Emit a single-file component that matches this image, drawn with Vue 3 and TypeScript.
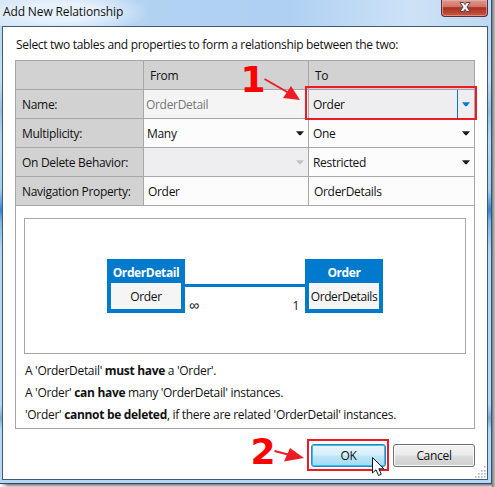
<script setup lang="ts">
interface Cell { text: string; arrow?: boolean; kind?: string }
interface Row { label: string; from: Cell; to: Cell }
const rows: Row[] = [
  { label: 'Name:', from: { text: 'OrderDetail', kind: 'readonly' }, to: { text: 'Order', arrow: true, kind: 'active' } },
  { label: 'Multiplicity:', from: { text: 'Many', arrow: true }, to: { text: 'One', arrow: true } },
  { label: 'On Delete Behavior:', from: { text: '', arrow: true, kind: 'disabled' }, to: { text: 'Restricted', arrow: true } },
  { label: 'Navigation Property:', from: { text: 'Order', kind: 'plain' }, to: { text: 'OrderDetails', kind: 'plain' } },
]
const grip: number[][] = [[9, 0], [6, 4], [9, 4], [3, 7], [6, 7], [9, 7], [0, 10], [3, 10], [6, 10], [9, 10]]
</script>

<template>
  <div class="screen">
    <div class="window">
      <header class="titlebar">
        <span class="title">Add New Relationship</span>
        <button class="close" aria-label="Close">
          <svg width="14" height="12" viewBox="0 0 14 12"><path d="M2 1.5h3.5L7 3.6l1.5-2.1H12L9 6l3 4.5H8.5L7 8.4l-1.5 2.1H2L5 6z" fill="#f5f3f3" stroke="#4d4654" stroke-width="1" /></svg>
        </button>
      </header>
      <main class="client">
        <p class="intro">Select two tables and properties to form a relationship between the two:</p>
        <section class="panel">
          <div class="grid">
            <div class="cell head"></div>
            <div class="cell head">From</div>
            <div class="cell head">To</div>
            <template v-for="r in rows" :key="r.label">
              <div class="cell label">{{ r.label }}</div>
              <div v-for="(c, i) in [r.from, r.to]" :key="i" class="cell value" :class="c.kind">
                <span class="text">{{ c.text }}</span>
                <span v-if="c.arrow" class="drop"><svg width="8" height="5" viewBox="0 0 8 5"><path d="M0 0.2h8L4.7 4.2h-1.4z" fill="currentColor" /></svg></span>
              </div>
            </template>
          </div>
          <div class="diagram">
            <div class="entity"><b>OrderDetail</b><span>Order</span></div>
            <div class="link"><i></i><div class="ends"><span class="many">∞</span><span>1</span></div></div>
            <div class="entity"><b>Order</b><span class="long">OrderDetails</span></div>
          </div>
          <div class="notes">
            <p>A 'OrderDetail' <b>must have</b> a 'Order'.</p>
            <p>A 'Order' <b>can have</b> many 'OrderDetail' instances.</p>
            <p>'Order' <b>cannot be deleted</b>, if there are related 'OrderDetail' instances.</p>
          </div>
        </section>
        <footer class="actions">
          <button class="btn ok">OK</button>
          <button class="btn cancel">Cancel</button>
        </footer>
      </main>
    </div>
    <svg class="overlay" width="495" height="487" viewBox="0 0 495 487">
      <g fill="#aab4c8"><rect v-for="(g, i) in grip" :key="i" :x="475 + g[0]" :y="466 + g[1]" width="1.6" height="1.6" /></g>
      <g fill="none" stroke="#ed1c24" stroke-width="2">
        <rect x="306" y="87" width="170" height="32" />
        <rect x="308" y="440" width="80" height="30" />
        <path d="M264.5 79L288 92.500M274.500 451L288 454.500" />
      </g>
      <path d="M300 100L291 86L283 98zM304 458L290 448L284 461.500z" fill="#ed1c24" />
      <text x="240.500" y="92" class="num">1</text>
      <text x="250.500" y="464" class="num">2</text>
      <path d="M372.500 457.500v15.500l3.500-3.200 2.500 5.700 2.800-1.200-2.500-5.500h5z" fill="#fff" stroke="#111827" />
    </svg>
  </div>
</template>

<style>
body { background: #fff; overflow: hidden; }
</style>
<style scoped>
.screen, .screen * { box-sizing: border-box; }
.screen { position: relative; width: 495px; height: 487px; overflow: hidden; font: 12px/16px "Open Sans", "Noto Sans", sans-serif; letter-spacing: -0.31px; color: #111; background: linear-gradient(90deg, #fff 0, #fff0 8px), linear-gradient(90deg, transparent 492px, #777 492px, #c4c4c4 495px), linear-gradient(#999 484px, #777 484px, #ddd 487px); }
.window { width: 492px; height: 484px; padding: 0 3px 3px 2px; border-right: 1px solid #315579; border-bottom: 1px solid #33495f; background: linear-gradient(#b4d4f3 0, #c5def5 80px, #98bfe0 110px, #b7d9f5 140px, #a5cff2 190px, #3686d2 210px, #7cb7e7 222px, #b3d7f5 250px, #b3d7f5 405px, #7cabd5 418px, #b3d7f5 430px); }
.titlebar { display: flex; justify-content: space-between; height: 26px; margin: 0 -3px 0 -2px; padding-left: 3px; background: radial-gradient(ellipse 90px 22px at 60px 12px, #e7f1fb 40%, #d5e7f900 100%), linear-gradient(90deg, #d0e4f8 0, #b2d2f2 150px, #afd0f2 290px, #cde2f7 410px, #bed9f2); }
.title { padding-top: 4px; letter-spacing: -0.13px; }
.close { width: 47px; height: 17px; margin-right: 3px; padding: 0; border: 1px solid #593039; border-top: 0; border-radius: 0 0 4px 4px; background: linear-gradient(#dd9a8e, #cf7468 42%, #ad2e20 48%, #c75743); box-shadow: inset 0 0 0 1px #eeb6ac99; display: flex; justify-content: center; align-items: center; }
.close svg { position: relative; top: -1px; }
.client { height: 454px; border: 1px solid #435a74; background: #fff; padding: 9px 12px 0; }
.intro { margin: 0; height: 24px; padding: 0 1px; line-height: 18px; white-space: nowrap; }
.panel { width: 460px; height: 369px; border: 1px solid #a7a7a7; }
.grid { display: grid; grid-template-columns: 128px 165px 165px; grid-auto-rows: 29px; width: 458px; }
.cell { display: flex; align-items: center; border-right: 1px solid #a7a7a7; border-bottom: 1px solid #a7a7a7; white-space: nowrap; background: #fcfcfc; line-height: 18px; }
.cell:nth-child(3n) { border-right: 0; }
.head, .label { background: #d2d2d2; padding: 2px 0 0 6px; }
.value { padding-left: 3px; justify-content: space-between; }
.text { padding-top: 2px; }
.value.readonly { background: #f4f4f4; color: #777; padding-left: 2px; }
.value.active, .value.disabled { background: #eeeef0; }
.value:nth-child(3n) { padding-left: 4px; }
.value.plain { padding-left: 4px; }
.value.plain:nth-child(3n) { padding-left: 5px; }
.drop { width: 17px; height: 28px; display: flex; align-items: center; justify-content: center; color: #1c1c1c; }
.disabled .drop { color: #c3c3c5; }
.active .drop { color: #007acc; border-left: 1px solid #007acc; }
.diagram { display: flex; align-items: flex-start; width: 442px; height: 136px; margin: 12px 0 0 8px; padding: 40px 0 0 82px; border: 1px solid #a7a7a7; }
.entity { width: 78px; height: 54px; padding: 0 4px 4px; background: #007acc; display: flex; flex-direction: column; text-align: center; }
.entity b { height: 24px; line-height: 27px; color: #fff; margin: 0 -4px; letter-spacing: -0.38px; }
.entity span { height: 26px; line-height: 27px; background: #f5f5f5; white-space: nowrap; }
.entity .long { letter-spacing: -0.4px; }
.link { width: 120px; padding-top: 25px; }
.link i { display: block; height: 3px; background: #007acc; }
.ends { display: flex; justify-content: space-between; padding: 11px 6px 0 4px; }
.many { font: 14px/15px "Liberation Sans", sans-serif; }
.notes { padding: 9px 9px 0; }
.notes p { margin: 0; height: 22px; white-space: nowrap; }
.actions { display: flex; justify-content: flex-end; gap: 7px; padding-top: 15px; }
.btn { height: 23px; padding: 0; border: 1px solid #707070; border-radius: 3px; font: inherit; letter-spacing: inherit; color: #111; background: linear-gradient(#f3f3f3, #ebebeb 48%, #dcdcdc 52%, #cfcfcf); box-shadow: inset 0 0 0 1px #fafafa; }
.ok { width: 75px; border-color: #3c7fb1; background: linear-gradient(#e8f5fc, #d7effb 48%, #bde6fb 52%, #a6daf4); box-shadow: inset 0 0 0 1px #28c4f4; }
.cancel { width: 82px; }
.overlay { position: absolute; inset: 0; pointer-events: none; }
.num { font: bold 36px "DejaVu Sans", sans-serif; fill: #fe0000; letter-spacing: 0; }
</style>
